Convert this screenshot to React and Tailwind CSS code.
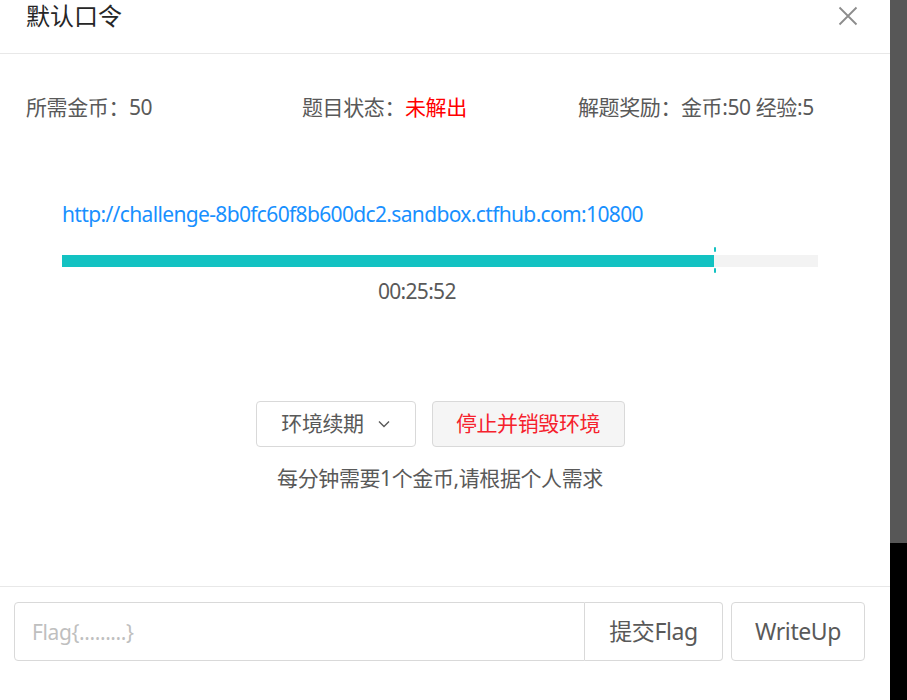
import React from 'react';

const FONT = { fontFamily: '"Noto Sans", "Noto Sans CJK SC", sans-serif' };

function CloseIcon() {
  return (
    <svg width="20" height="20" viewBox="0 0 20 20" fill="none" stroke="#8c8c8c" strokeWidth="1.8">
      <path d="M1.5 1.5 L18.5 18.5 M18.5 1.5 L1.5 18.5" />
    </svg>
  );
}

function ChevronDown() {
  return (
    <svg width="12" height="8" viewBox="0 0 12 8" fill="none" stroke="#595959" strokeWidth="1.4">
      <path d="M1 1.5 L6 6.5 L11 1.5" />
    </svg>
  );
}

export default function App() {
  const progress = 652 / 756;
  return (
    <div className="flex w-[907px] h-[700px] overflow-hidden tracking-[-0.4px]" style={FONT}>
      <div className="w-[890px] h-[700px] bg-white flex flex-col">
        {/* header */}
        <div className="h-[54px] border-b border-[#e8e8e8] flex items-start justify-between pl-[26px] pr-[32px] shrink-0">
          <div className="text-[24px] leading-[32px] text-[#262626] tracking-normal">默认口令</div>
          <button className="mt-[6px]"><CloseIcon /></button>
        </div>

        {/* info */}
        <div className="flex pl-[26px] mt-[40px] text-[21px] leading-[26px] text-[#595959]">
          <div className="w-[276px]">所需金币：50</div>
          <div className="w-[276px]">题目状态：<span className="text-[#ff0000]">未解出</span></div>
          <div>解题奖励：金币:50 经验:5</div>
        </div>

        {/* env */}
        <div className="pl-[62px] w-[818px] mt-[81px]">
          <a className="text-[21px] leading-[26px] text-[#1890ff] tracking-[-0.65px] block">http://challenge-8b0fc60f8b600dc2.sandbox.ctfhub.com:10800</a>
          <div className="relative mt-[28px] h-[12px] w-[756px] bg-[#f3f3f3]">
            <div className="h-[12px] bg-[#13c2c2]" style={{ width: `${progress * 100}%` }} />
            <div className="absolute top-[-8px] w-[2px] h-[5px] bg-[#13c2c2] rounded-[1px]" style={{ left: `${progress * 100}%` }} />
            <div className="absolute bottom-[-6px] w-[2px] h-[5px] bg-[#13c2c2] rounded-[1px]" style={{ left: `${progress * 100}%` }} />
          </div>
          <div className="pl-[316px] mt-[11px] text-[21px] leading-[26px] text-[#595959] tracking-[-0.7px]">00:25:52</div>

          <div className="flex justify-center gap-[16px] mt-[97px]">
            <button className="w-[160px] h-[46px] border border-[#d9d9d9] rounded-[4px] bg-white flex items-center justify-center gap-[14px] text-[21px] text-[#595959]">
              环境续期 <ChevronDown />
            </button>
            <button className="w-[193px] h-[46px] border border-[#d9d9d9] rounded-[4px] bg-[#f5f5f5] text-[21px] text-[#f5222d]">
              停止并销毁环境
            </button>
          </div>
          <div className="text-center mt-[18px] text-[21px] leading-[26px] text-[#595959]">每分钟需要1个金币,请根据个人需求</div>
        </div>

        {/* footer */}
        <div className="mt-auto mb-[39px] border-t border-[#e8e8e8] pt-[15px] px-[14px] flex gap-[8px]">
          <div className="flex h-[59px]">
            <input
              placeholder="Flag{.........}"
              className="w-[571px] h-[59px] border border-[#d9d9d9] rounded-l-[4px] px-[17px] text-[21px] text-[#595959] placeholder:text-[#bfbfbf] outline-none"
            />
            <button className="w-[138px] h-[59px] border border-l-0 border-[#d9d9d9] rounded-r-[4px] bg-white text-[23px] text-[#595959]">提交Flag</button>
          </div>
          <button className="w-[134px] h-[59px] border border-[#d9d9d9] rounded-[4px] bg-white text-[23px] text-[#595959]">WriteUp</button>
        </div>
      </div>
      <div className="w-[17px] flex flex-col">
        <div className="h-[543px] bg-[#575757]" />
        <div className="flex-1 bg-black" />
      </div>
    </div>
  );
}
